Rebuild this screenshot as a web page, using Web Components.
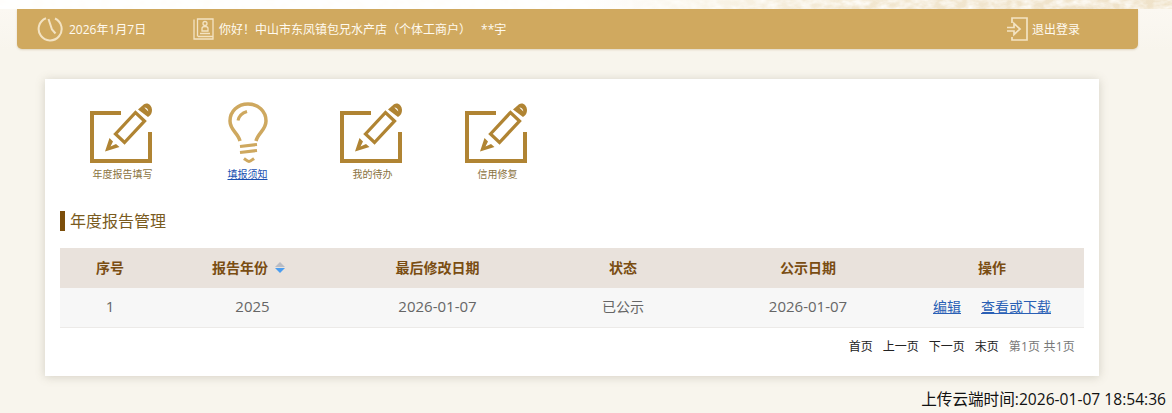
<!DOCTYPE html>
<html lang="zh"><head><meta charset="utf-8"><title>年度报告</title>
<style>
html,body{margin:0;height:413px;overflow:hidden;background:#f8f5ed;font-family:"Open Sans","Noto Sans CJK SC",sans-serif;}
</style></head><body>
<x-app></x-app>
<script>
const PEN=`<svg width="64" height="62" viewBox="0 0 64 62" fill="none"><path d="M31 12H2V60H60V31" stroke="#b08433" stroke-width="4"/><path d="M15 50.500L19.500 37L23 40.500L20.500 45.500L26 43L29.500 46Z" fill="#b08433"/><path d="M25.500 33L45.500 11.500L54.500 20L34.500 41.500Z" stroke="#b08433" stroke-width="3.300"/><path d="M48 8.500L54 3.200C58 1.200 61.500 4 62 9C62 12 61 14 58 16Z" fill="#b08433"/><path d="M54.300 6.500C56.500 6.500 58 8 58.300 10.400Z" fill="#fff"/></svg>`;
const BULB=`<svg width="40" height="61" viewBox="0 0 40 61" fill="none" stroke="#cea85f" stroke-width="3.500"><path d="M12 39C10 31 2 28 2 19C2 9 10 2 20 2C30 2 38 9 38 19C38 28 30 31 28 39"/><path d="M10 18.500C11 13.500 14 11 19 9.500" stroke-width="3"/><path d="M12 44.500L29 42.500M12 50.500L29 48.500" stroke-width="3"/><path d="M16 56.500C18 58 19.500 59.500 21 59.500C22.500 59.500 24 58 26 56.500" stroke-width="3"/></svg>`;
const CLOCK=`<svg width="26" height="26" viewBox="0 0 26 26" fill="none" stroke="#f3e3c3" stroke-width="2"><path d="M9 2.200A11.500 11.500 0 1 0 18 2.500"/><path d="M11.500 3L15 13.500L18.500 17.500"/></svg>`;
const BADGE=`<svg width="21" height="22" viewBox="0 0 21 22" fill="none" stroke="#f3e3c3" stroke-width="1.300"><path d="M1 1.500V21H20V1H4.500V18.500"/><circle cx="12" cy="5.500" r="2"/><path d="M9 13V10.500C9 9 10.500 8.500 12 8.500C13.500 8.500 15 9 15 10.500V13Z"/><path d="M7 15.500H17M5 18.500H20"/></svg>`;
const EXIT=`<svg width="21" height="24" viewBox="0 0 21 24" fill="none" stroke="#f3e3c3" stroke-width="1.700"><path d="M5 6V1H20V23H5V20"/><path d="M0 10.500H7V6.500L13 12L7 17.500V14H0"/></svg>`;
class XEl extends HTMLElement{
  constructor(h){super();this.attachShadow({mode:'open'}).innerHTML=h;}
}
customElements.define('x-topbar',class extends XEl{constructor(){super(`<style>
:host{display:block;height:9px;position:relative}
.band{height:9px;background:#fff;overflow:hidden}
.bar{margin:0 34px 0 17px;height:40px;background:#d0a95f;border-radius:0 0 5px 5px;box-shadow:0 1px 2px rgba(150,120,60,.25);display:flex;align-items:center;color:#fffaf0;font-size:12px;padding-left:20px;box-sizing:border-box}
span{white-space:nowrap}
svg{display:block;flex:none}
.date{margin-left:6px;width:124px}
.hello{margin-left:5px;width:788px}
.hello i{font-style:normal;margin-left:10px}
.out{margin-left:4px}
</style>
<div class="band"><svg width="1172" height="9"><defs><linearGradient id="f" x1="0" x2="1"><stop offset=".5" stop-color="#fff"/><stop offset=".62" stop-color="#f8f2e4"/><stop offset=".72" stop-color="#f2e7d0"/><stop offset="1" stop-color="#efe2c9"/></linearGradient><filter id="t" x="0" y="0" width="100%" height="100%"><feTurbulence type="fractalNoise" baseFrequency=".09 .16" numOctaves="3" seed="4"/><feColorMatrix values="0 0 0 0 1 0 0 0 0 .99 0 0 0 0 .96 1.800 0 0 0 -.6"/></filter></defs><rect width="1172" height="9" fill="url(#f)"/><rect width="1172" height="9" filter="url(#t)"/></svg></div>
<div class="bar">${CLOCK}<span class="date">2026年1月7日</span>${BADGE}<span class="hello">你好！中山市东凤镇包兄水产店（个体工商户）<i>**宇</i></span>${EXIT}<span class="out">退出登录</span></div>`);}});
customElements.define('x-tool',class extends XEl{constructor(){super(`<style>
:host{display:flex;flex-direction:column;align-items:center;width:125px;height:86px;font-size:10px;color:#8a7240;line-height:12px}
.i{height:63px;display:flex;align-items:flex-end;justify-content:center;margin-bottom:5px}
:host(:not([link])) .i{margin-left:-2px}
svg{display:block}
:host([link]){color:#1a4fb0;text-decoration:underline}
</style><div class="i"></div><span><slot></slot></span>`);}
connectedCallback(){this.shadowRoot.querySelector('.i').innerHTML=this.getAttribute('icon')==='bulb'?BULB:PEN;}});
customElements.define('x-title',class extends XEl{constructor(){super(`<style>
:host{display:block;border-left:5px solid #7c4e0a;padding-left:5px;height:20px;line-height:20px;font-size:16px;color:#7a5b1e}
</style><slot></slot>`);}});
customElements.define('x-report-table',class extends XEl{constructor(){super(`<style>
:host{display:block;font-size:15px}
.r{display:grid;grid-template-columns:100px 185px 185px 186px 184px 184px;text-align:center;align-items:center;box-sizing:border-box;padding-bottom:3px}
.h{height:40px;background:#e9e2dc;color:#7a4d12;font-weight:700;font-size:14px}
.y{padding-right:8px}
.b{height:40px;background:#f7f7f7;color:#666;border-bottom:1px solid #eceae8}
.c{font-size:14px}
a{color:#2a5fb5;text-decoration:underline}
a+a{margin-left:20px}
.s{display:inline-block;vertical-align:0;margin-left:7px;width:10px;height:11px}
svg{display:block}
</style>
<div class="r h"><div>序号</div><div class="y">报告年份<span class="s"><svg width="10" height="11"><path d="M5 0L10 5H0Z" fill="#b9bcc4"/><path d="M5 11L10 6H0Z" fill="#4b9df0"/></svg></span></div><div>最后修改日期</div><div>状态</div><div>公示日期</div><div>操作</div></div>
<div class="r b"><div>1</div><div>2025</div><div>2026-01-07</div><div class="c">已公示</div><div>2026-01-07</div><div class="c"><a>编辑</a><a>查看或下载</a></div></div>`);}});
customElements.define('x-pager',class extends XEl{constructor(){super(`<style>
:host{display:flex;justify-content:flex-end;gap:10px;font-size:12px;color:#222;padding:11px 9px 0 0;line-height:16px}
.m{color:#777;letter-spacing:.2px}
</style><span>首页</span><span>上一页</span><span>下一页</span><span>末页</span><span class="m">第1页 共1页</span>`);}});
customElements.define('x-app',class extends XEl{constructor(){super(`<style>
:host{display:block;height:413px;position:relative;background:linear-gradient(#fbf8f2 9px,#f8f5ed 50px)}
.card{margin:30px 73px 0 45px;height:297px;background:#fff;box-shadow:0 1px 9px rgba(120,110,90,.28);padding:15px;box-sizing:border-box}
.tools{display:flex;height:92px;margin-top:6px}
x-title{margin-top:19px;margin-bottom:17px}
.up{text-align:right;padding:14px 6px 0 0;font-size:15.600px;line-height:19px;color:#111}
</style>
<x-topbar style="height:49px"></x-topbar>
<div class="card">
<div class="tools"><x-tool icon="pen">年度报告填写</x-tool><x-tool icon="bulb" link>填报须知</x-tool><x-tool icon="pen">我的待办</x-tool><x-tool icon="pen">信用修复</x-tool></div>
<x-title>年度报告管理</x-title>
<x-report-table></x-report-table>
<x-pager></x-pager>
</div>
<div class="up">上传云端时间:2026-01-07 18:54:36</div>`);}});
</script>
</body></html>
